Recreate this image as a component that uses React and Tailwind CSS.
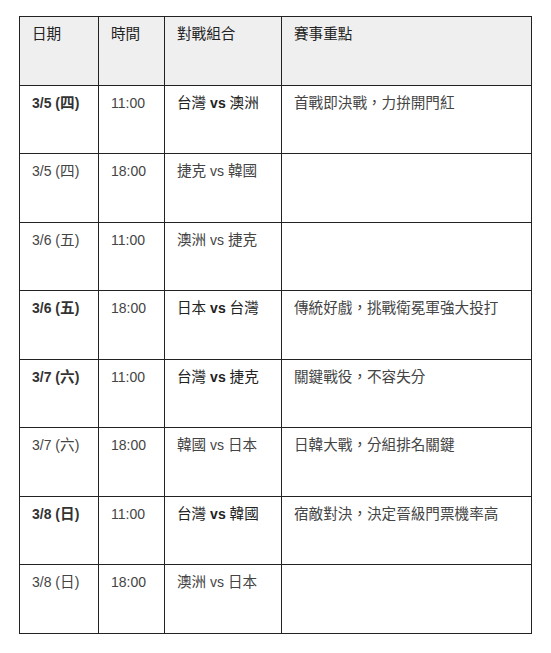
const rows = [
  { d: "3/5 (四)", t: "11:00", m: "台灣 vs 澳洲", n: "首戰即決戰，力拚開門紅", b: true },
  { d: "3/5 (四)", t: "18:00", m: "捷克 vs 韓國", n: "", b: false },
  { d: "3/6 (五)", t: "11:00", m: "澳洲 vs 捷克", n: "", b: false },
  { d: "3/6 (五)", t: "18:00", m: "日本 vs 台灣", n: "傳統好戲，挑戰衛冕軍強大投打", b: true },
  { d: "3/7 (六)", t: "11:00", m: "台灣 vs 捷克", n: "關鍵戰役，不容失分", b: true },
  { d: "3/7 (六)", t: "18:00", m: "韓國 vs 日本", n: "日韓大戰，分組排名關鍵", b: false },
  { d: "3/8 (日)", t: "11:00", m: "台灣 vs 韓國", n: "宿敵對決，決定晉級門票機率高", b: true },
  { d: "3/8 (日)", t: "18:00", m: "澳洲 vs 日本", n: "", b: false },
];

const cell = "border border-[#222] align-top px-3 pt-[7px] h-[68.5px]";

// CJK glyphs in the shot run a little wider than the Latin ones
function Txt({ s }) {
  return s.split(/([\u3000-\u9fff\uff00-\uffef]+)/).map((part, i) =>
    /[\u3000-\u9fff\uff00-\uffef]/.test(part) ? (
      <span key={i} className="text-[14.6px]">{part}</span>
    ) : (
      part
    )
  );
}

export default function App() {
  return (
    <div
      className="bg-white min-h-[653px] pt-4 pl-[19px] text-[14px] leading-[20px]"
      style={{ fontFamily: '"Liberation Sans", "Noto Sans CJK TC", sans-serif' }}
    >
      <table className="border-collapse w-[513px] table-fixed">
        <colgroup>
          <col className="w-[79px]" />
          <col className="w-[66px]" />
          <col className="w-[117px]" />
          <col />
        </colgroup>
        <thead>
          <tr className="bg-[#efefef] text-[#222]">
            {["日期", "時間", "對戰組合", "賽事重點"].map((h) => (
              <th key={h} className={`${cell} text-left font-normal`}>
                <Txt s={h} />
              </th>
            ))}
          </tr>
        </thead>
        <tbody className="text-[#444]">
          {rows.map((r, i) => {
            const [a, c] = r.m.split(" vs ");
            return (
              <tr key={i}>
                <td className={`${cell} ${r.b ? "font-bold text-[#333]" : ""}`}>
                  <Txt s={r.d} />
                </td>
                <td className={cell}>{r.t}</td>
                <td className={`${cell} ${r.b ? "text-[#222]" : ""}`}>
                  <Txt s={a} /> {r.b ? <b>vs</b> : "vs"} <Txt s={c} />
                </td>
                <td className={cell}>
                  <Txt s={r.n} />
                </td>
              </tr>
            );
          })}
        </tbody>
      </table>
    </div>
  );
}
